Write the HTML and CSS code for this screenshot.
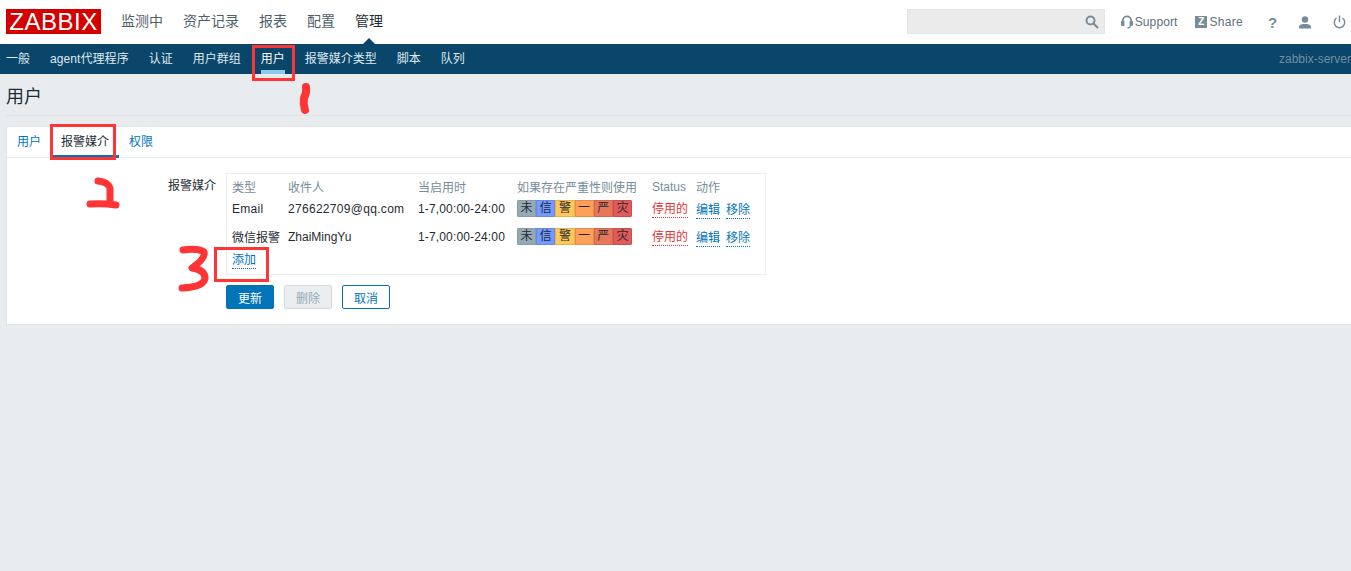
FILE: index.html
```html
<!DOCTYPE html>
<html lang="zh">
<head>
<meta charset="utf-8">
<title>用户</title>
<link rel="stylesheet" href="styles.css">
</head>
<body>
<header class="topbar">
  <div class="logo">ZABBIX</div>
  <nav class="mainnav">
    <a>监测中</a><a>资产记录</a><a>报表</a><a>配置</a><a class="on">管理</a>
  </nav>
  <div class="tools">
    <div class="search">
      <svg class="ic" width="14" height="14" viewBox="0 0 14 14"><circle cx="5.5" cy="5.5" r="4" fill="none" stroke="#7b8b96" stroke-width="2"/><path d="M8.5 8.5L13 13" stroke="#7b8b96" stroke-width="2.2"/></svg>
    </div>
    <a class="tool support"><svg width="12" height="14" viewBox="0 0 12 14"><path d="M1.800 9V5.500a4.200 4.200 0 0 1 8.400 0V9" fill="none" stroke="#768d99" stroke-width="1.800"/><rect x="0" y="6" width="3.500" height="5" rx="1" fill="#768d99"/><rect x="8.500" y="6" width="3.500" height="5" rx="1" fill="#768d99"/><path d="M9.500 11Q9 13 6.500 13" fill="none" stroke="#768d99" stroke-width="1.300"/></svg>Support</a>
    <a class="tool share"><span class="zbox">Z</span>Share</a>
    <a class="tool help">?</a>
    <a class="tool user"><svg width="14" height="13" viewBox="0 0 14 13"><circle cx="7" cy="3.5" r="3.2" fill="#768d99"/><path d="M1 12.5V11Q1 8.5 5 8h4q4 .5 4 3v1.5z" fill="#768d99"/></svg></a>
    <a class="tool power"><svg width="13" height="14" viewBox="0 0 13 14"><path d="M3.5 3.2a5.2 5.2 0 1 0 6 0" fill="none" stroke="#768d99" stroke-width="1.5"/><path d="M6.5 0.5V7" stroke="#768d99" stroke-width="1.5"/></svg></a>
  </div>
</header>
<nav class="subnav">
  <div class="sublinks">
    <a>一般</a><a class="wide">agent代理程序</a><a>认证</a><a>用户群组</a><a class="on">用户</a><a>报警媒介类型</a><a>脚本</a><a>队列</a>
  </div>
  <span class="server">zabbix-server</span>
</nav>
<main class="page">
  <h1 class="title">用户</h1>
  <section class="card">
    <div class="tabs">
      <a>用户</a><a class="on">报警媒介</a><a>权限</a>
    </div>
    <div class="form">
      <div class="label">报警媒介</div>
      <div class="field">
        <div class="tablebox">
          <table class="media">
            <thead>
              <tr><th class="c1">类型</th><th class="c2">收件人</th><th class="c3">当启用时</th><th class="c4">如果存在严重性则使用</th><th class="c5">Status</th><th class="c6">动作</th></tr>
            </thead>
            <tbody>
              <tr>
                <td class="latin">Email</td><td class="latin">276622709@qq.com</td><td class="time">1-7,00:00-24:00</td>
                <td class="sevcell"><div class="sev"><span class="s1">未</span><span class="s2">信</span><span class="s3">警</span><span class="s4">一</span><span class="s5">严</span><span class="s6">灾</span></div></td>
                <td><a class="stat">停用的</a></td>
                <td><a class="lnk">编辑</a><a class="lnk">移除</a></td>
              </tr>
              <tr>
                <td class="cjk">微信报警</td><td>ZhaiMingYu</td><td class="time">1-7,00:00-24:00</td>
                <td class="sevcell"><div class="sev"><span class="s1">未</span><span class="s2">信</span><span class="s3">警</span><span class="s4">一</span><span class="s5">严</span><span class="s6">灾</span></div></td>
                <td><a class="stat">停用的</a></td>
                <td><a class="lnk">编辑</a><a class="lnk">移除</a></td>
              </tr>
            </tbody>
          </table>
          <a class="lnk add">添加</a>
        </div>
        <div class="buttons">
          <button class="btn primary">更新</button>
          <button class="btn disabled">删除</button>
          <button class="btn outline">取消</button>
        </div>
      </div>
    </div>
  </section>
</main>
<svg class="marks" width="1351" height="571" viewBox="0 0 1351 571">
  <g fill="none" stroke="#ff3535" stroke-width="3">
    <rect x="253.500" y="46.500" width="40" height="33"/>
    <rect x="51.500" y="125.500" width="63" height="33"/>
    <rect x="215.500" y="248.500" width="52" height="32"/>
  </g>
  <g fill="none" stroke="#ff3535" stroke-linecap="round" stroke-linejoin="round">
    <path d="M306 87Q307 92 304 98Q303 104 305 110" stroke-width="8"/>
    <path d="M98 181Q108 182 110 188L110 203M90 204Q103 203 116 205" stroke-width="7"/>
    <path d="M183 250Q198 248 204 252Q206 258 192 268Q205 270 205 278Q204 287 182 288" stroke-width="7"/>
  </g>
</svg>
</body>
</html>
```
FILE: styles.css
```css
* { box-sizing: border-box; }
html, body { margin: 0; height: 571px; overflow: hidden; }
body {
  background: #e9ecef;
  color: #1f2c33;
  font-family: "Liberation Sans", "Noto Sans CJK SC", sans-serif;
  font-size: 12px;
  position: relative;
}
a { display: block; }

.topbar {
  height: 44px;
  background: #fff;
  display: flex;
  align-items: center;
  padding: 0 0 0 6px;
  position: relative;
}
.logo {
  width: 95px;
  height: 25px;
  background: #d40000;
  color: #fff;
  font-size: 24px;
  line-height: 25px;
  text-align: center;
  letter-spacing: 0.5px;
  margin-top: -1px;
}
.mainnav {
  display: flex;
  gap: 20px;
  margin-left: 20px;
  margin-top: -4px;
  font-size: 14px;
  color: #4f5f69;
}
.mainnav .on { color: #1f2c33; position: relative; }
.mainnav .on::after {
  content: "";
  position: absolute;
  left: 6px;
  top: 28px;
  border: 8px solid transparent;
  border-top: 0;
  border-bottom-color: #0a466a;
}
.tools {
  margin-left: auto;
  display: flex;
  align-items: center;
  color: #5f6f79;
  height: 100%;
}
.search {
  width: 198px;
  height: 25px;
  background: #ebebeb;
  border: 1px solid #e3e5e6;
  display: flex;
  align-items: center;
  justify-content: flex-end;
  padding-right: 5px;
  margin-top: -1px;
}
.tool { display: flex; align-items: center; color: #5f6f79; }
.support { margin-left: 16px; gap: 2px; letter-spacing: 0.1px; }
.share { margin-left: 18px; gap: 2px; letter-spacing: 0.3px; }
.zbox {
  width: 12px;
  height: 12px;
  background: #768d99;
  color: #fff;
  font-size: 10px;
  font-weight: 700;
  line-height: 12px;
  text-align: center;
}
.help { margin-left: 25px; width: 10px; font-size: 15px; font-weight: 700; color: #768d99; }
.user { margin-left: 20px; }
.power { margin-left: 21px; margin-right: 5px; }

.subnav {
  height: 30px;
  background: #0a466a;
  display: flex;
  justify-content: space-between;
  overflow: hidden;
  white-space: nowrap;
}
.sublinks {
  display: flex;
  gap: 20px;
  padding-left: 6px;
  color: #dfe9ef;
}
.sublinks a { height: 30px; line-height: 30px; }
.sublinks .wide { letter-spacing: 0.08px; }
.sublinks .on { color: #fff; border-bottom: 4px solid #8ccaf0; }
.server { line-height: 30px; color: #6f8fa3; }

.page { padding: 0 0 0 6px; }
.title {
  margin: 0;
  height: 42px;
  border-bottom: 1px solid #dfe3e6;
  font-size: 18px;
  font-weight: 400;
  line-height: 46px;
  color: #1f2c33;
}
.card {
  margin-top: 10px;
  height: 199px;
  background: #fff;
  border: 1px solid #dfe4e7;
  border-right: 0;
}
.tabs {
  display: flex;
  height: 31px;
  border-bottom: 1px solid #ebeef0;
  color: #0275b8;
}
.tabs a {
  padding: 0 10px;
  height: 31px;
  line-height: 31px;
}
.tabs .on { color: #1f2c33; border-bottom: 3px solid #0275b8; }
.form { display: flex; padding-top: 15px; }
.label { width: 209px; text-align: right; padding-top: 3px; }
.field { margin-left: 10px; }
.tablebox {
  width: 540px;
  height: 102px;
  border: 1px solid #ebeef0;
  padding: 2px 5px 0;
}
.media { border-collapse: collapse; table-layout: fixed; width: 528px; }
.media th {
  font-weight: 400;
  color: #768d99;
  text-align: left;
  padding: 0;
  height: 21px;
}
.media td { padding: 5px 0 0; height: 28px; vertical-align: top; }
.media .latin { letter-spacing: 0.3px; }
.media .time { letter-spacing: 0.15px; }
.media .sevcell { padding-top: 3px; }
.media .cjk { padding-top: 3px; }
.c1 { width: 56px; }
.c2 { width: 130px; }
.c3 { width: 99px; }
.c4 { width: 135px; }
.c5 { width: 44px; }
.sev {
  display: flex;
  width: 115px;
  height: 17px;
  border-radius: 2px;
  overflow: hidden;
  line-height: 15px;
  text-align: center;
  color: #1f2c33;
}
.sev span { flex: 1; border-width: 1px; border-style: solid; }
.sev .s1 { background: #97aab3; border-color: #859ba6; }
.sev .s2 { background: #7499ff; border-color: #6388ee; }
.sev .s3 { background: #ffc859; border-color: #e8b24c; }
.sev .s4 { background: #ffa059; border-color: #e38e4e; }
.sev .s5 { background: #e97659; border-color: #d0684f; }
.sev .s6 { background: #e45959; border-color: #c94e4e; }
.stat {
  display: inline-block;
  color: #e33734;
  border-bottom: 1px dotted #e33734;
  line-height: 15px;
}
.lnk {
  display: inline-block;
  color: #0275b8;
  border-bottom: 1px dotted #0275b8;
  line-height: 16px;
  margin-right: 6px;
}
.add { margin-top: -2px; }
.buttons { display: flex; gap: 10px; margin-top: 10px; }
.btn {
  width: 48px;
  height: 24px;
  font: inherit;
  border-radius: 2px;
  padding: 0;
  border: 1px solid;
}
.primary { background: #0275b8; border-color: #0275b8; color: #fff; }
.disabled { background: #ebeef0; border-color: #d3dadf; color: #97aab3; }
.outline { background: #fff; border-color: #0275b8; color: #0275b8; }
.marks { position: absolute; left: 0; top: 0; pointer-events: none; }
```
